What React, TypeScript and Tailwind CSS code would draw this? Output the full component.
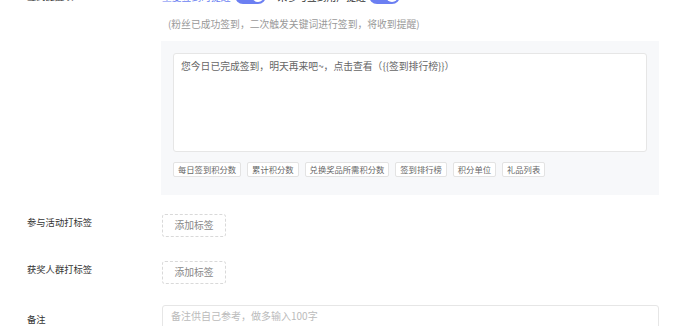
const FONT = { fontFamily: '"Noto Sans CJK SC", "Noto Sans", sans-serif' };

const VARIABLES = ['每日签到积分数', '累计积分数', '兑换奖品所需积分数', '签到排行榜', '积分单位', '礼品列表'];

function Switch() {
  return (
    <span className="relative inline-block h-[16px] w-[31px] rounded-full bg-[#6b7ff2]">
      <span className="absolute right-[2px] top-[2px] h-[12px] w-[12px] rounded-full bg-white" />
    </span>
  );
}

function Row({ label, children, className = '' }: { label: string; children: React.ReactNode; className?: string }) {
  return (
    <div className={`flex items-center ${className}`}>
      <div className="w-[162px] shrink-0 pl-[27px] text-[9.3px] text-[#333]">{label}</div>
      <div className="flex-1">{children}</div>
    </div>
  );
}

export default function App() {
  return (
    <div className="h-[326px] w-[700px] overflow-hidden bg-white" style={FONT}>
      <div className="-mt-[11px] pr-[41px]">
        {/* Reminder switches (scrolled partly out of view) */}
        <Row label="签到提醒项" className="h-[16px]">
          <div className="flex items-center">
            <span className="text-[9.8px] text-[#6b7ff2]">重复签到时提醒</span>
            <span className="ml-[4px]"><Switch /></span>
            <span className="ml-[12px] text-[9.8px] text-[#333]">未参与签到用户提醒</span>
            <span className="ml-[3px]"><Switch /></span>
          </div>
        </Row>

        <div className="ml-[168px] mt-[12px] text-[9.8px] leading-[14px] text-[#999]">
          (粉丝已成功签到，二次触发关键词进行签到，将收到提醒)
        </div>

        {/* Message editor */}
        <div className="ml-[161px] mt-[10px] bg-[#f7f8fa] px-[12px] pb-[18px] pt-[12px]">
          <div className="h-[99px] rounded-[3px] border border-[#e6e6e6] bg-white px-[7px] py-[5px] text-[9.8px] leading-[14px] text-[#666]">
            您今日已完成签到，明天再来吧~，点击查看（{'{{'}签到排行榜{'}}'}）
          </div>
          <div className="mt-[10px] flex gap-[6px]">
            {VARIABLES.map((v) => (
              <span
                key={v}
                className="flex h-[15px] items-center rounded-[2px] border border-[#e3e3e3] bg-white px-[4px] text-[8.3px] text-[#666]"
              >
                {v}
              </span>
            ))}
          </div>
        </div>

        <Row label="参与活动打标签" className="mt-[15px]">
          <span className="inline-flex h-[23px] w-[64px] items-center justify-center rounded-[3px] border border-dashed border-[#d9d9d9] text-[9.8px] text-[#888]">
            添加标签
          </span>
        </Row>

        <Row label="获奖人群打标签" className="mt-[20px]">
          <span className="inline-flex h-[23px] w-[64px] items-center justify-center rounded-[3px] border border-dashed border-[#d9d9d9] text-[9.8px] text-[#888]">
            添加标签
          </span>
        </Row>

        <div className="mt-[21px] flex">
          <div className="w-[162px] shrink-0 pl-[27px] pt-[8px] text-[9.3px] text-[#333]">备注</div>
          <div className="flex-1">
            <div className="h-[30px] rounded-[3px] border border-[#e6e6e6] bg-white px-[8px] pt-[3px] text-[10px] leading-[14px] text-[#bbb]">
              备注供自己参考，做多输入100字
            </div>
          </div>
        </div>
      </div>
    </div>
  );
}
